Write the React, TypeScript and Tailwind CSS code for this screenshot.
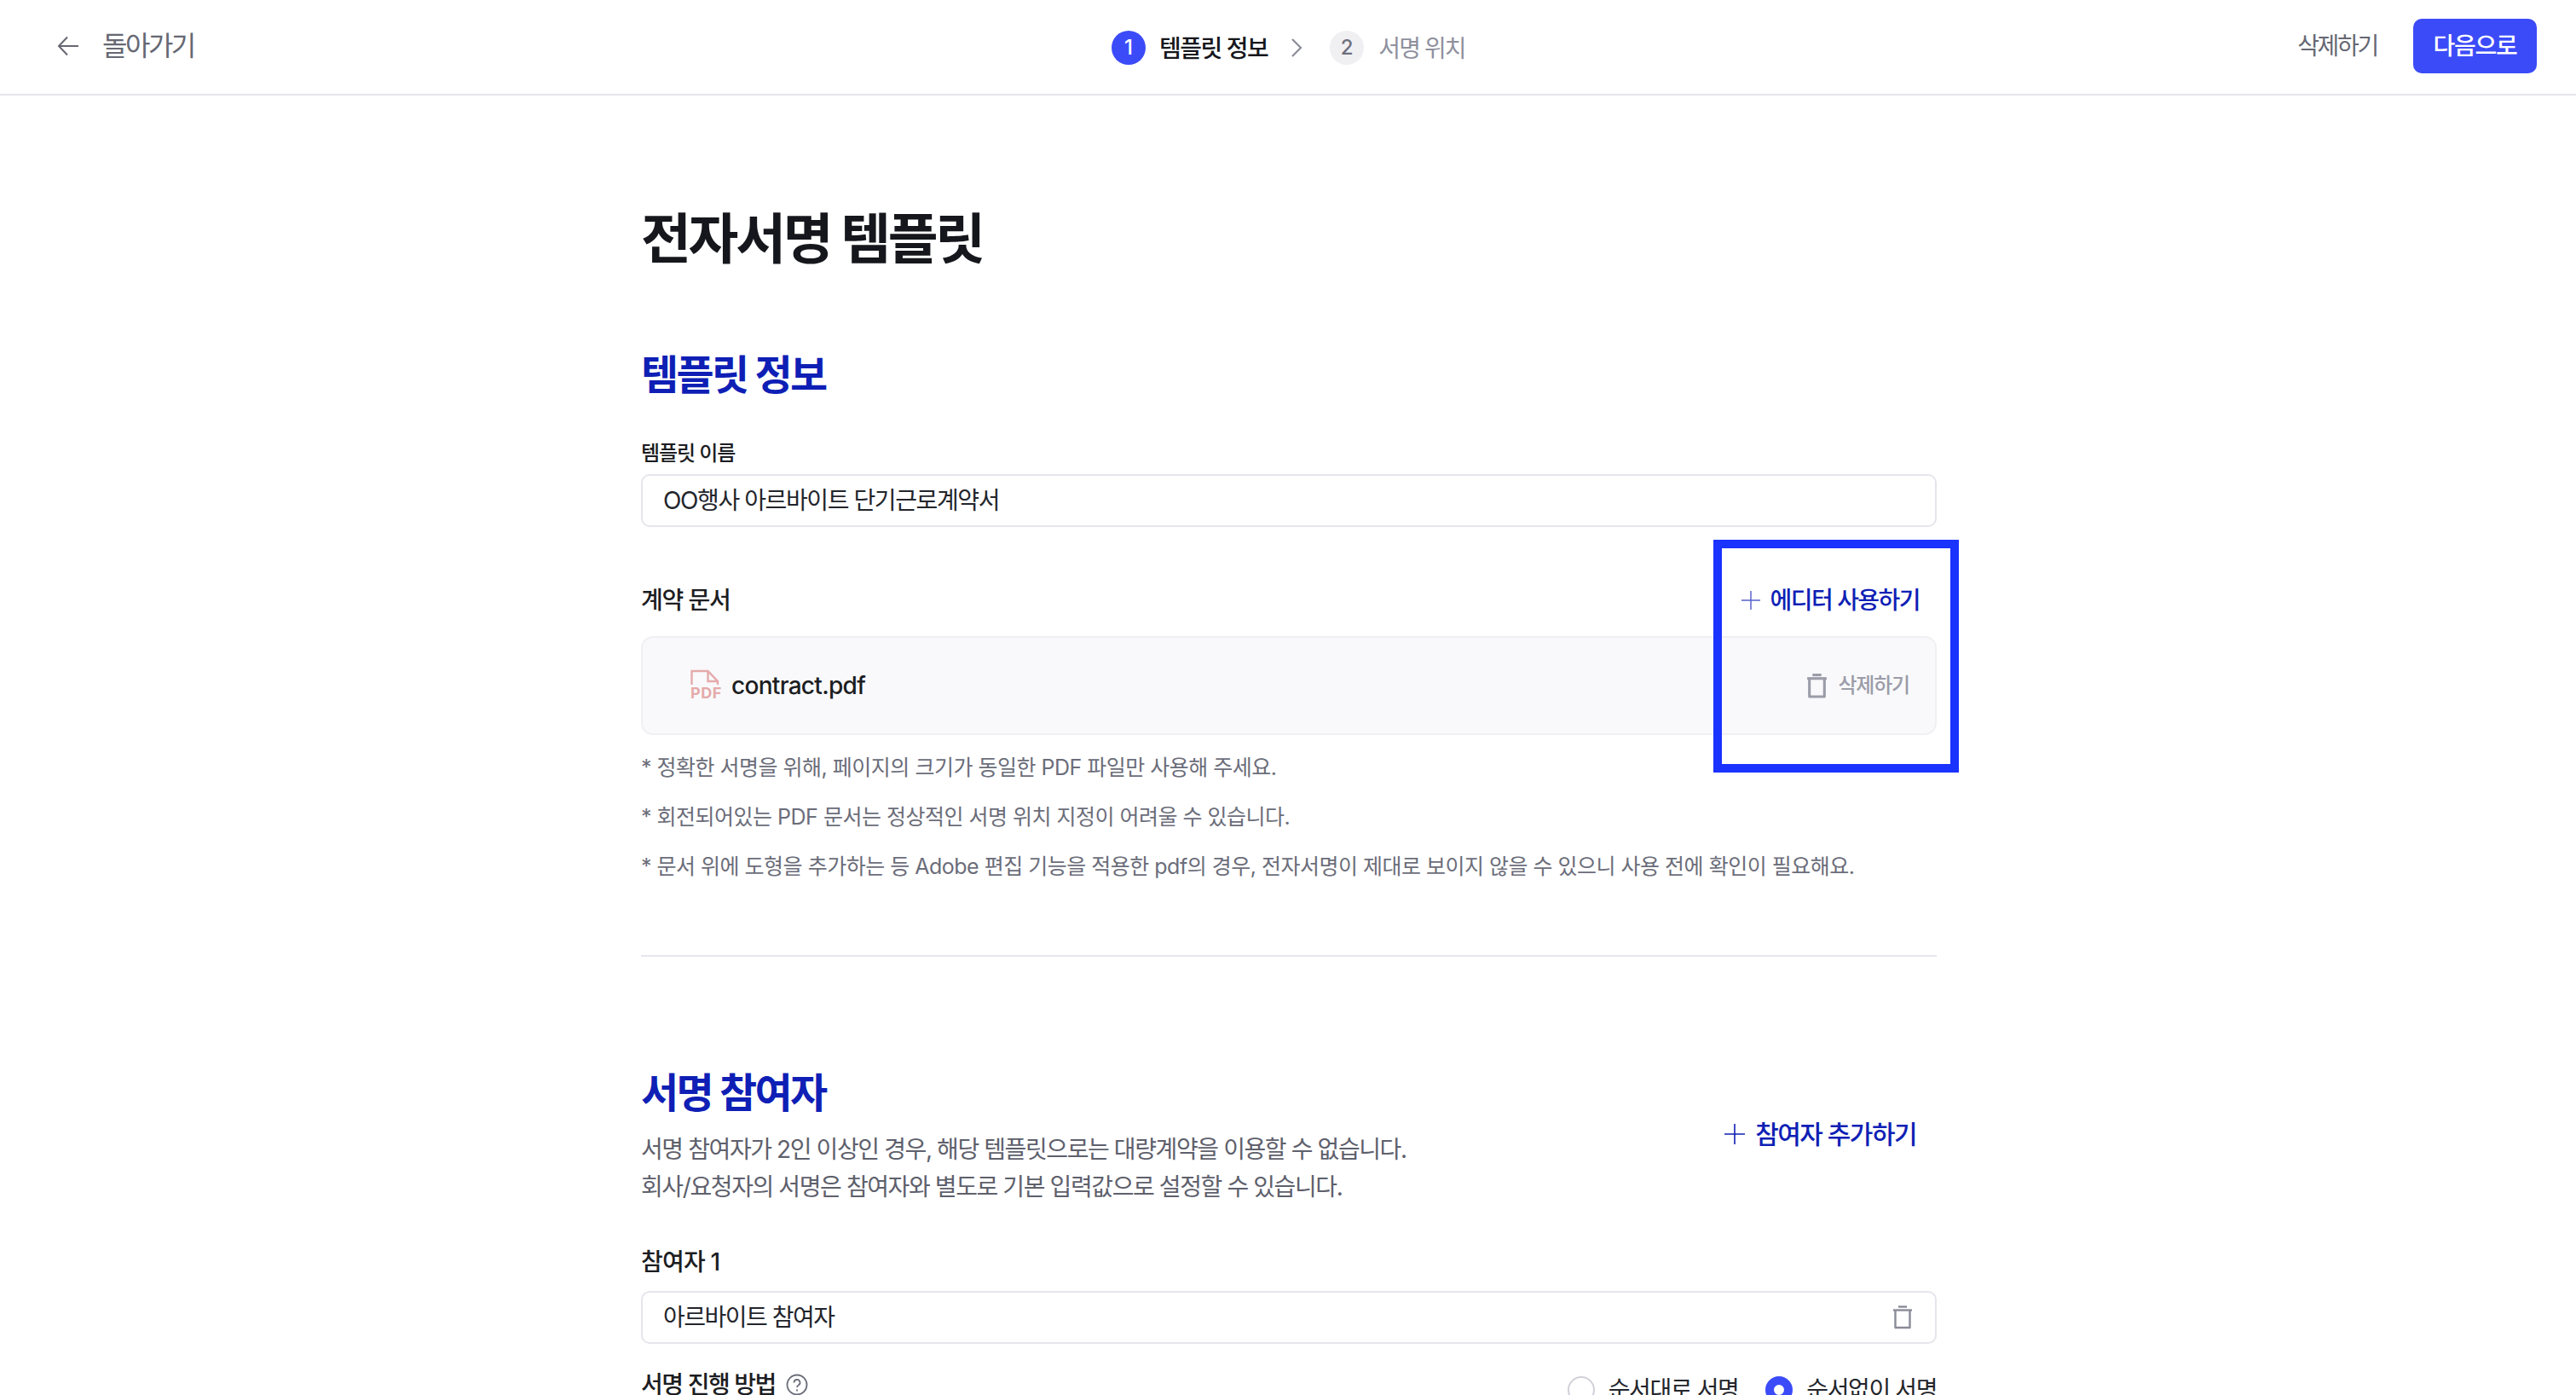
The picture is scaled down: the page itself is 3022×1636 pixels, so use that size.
import React from "react";

function Trash({ className, sw = 2.4 }: { className?: string; sw?: number }) {
  return (
    <svg viewBox="0 0 24 28" className={className} fill="none" stroke="currentColor" strokeWidth={sw}>
      <path d="M7 1.5h10" />
      <path d="M1 5.5h22" />
      <path d="M3.5 5.5v20.5h17V5.5" strokeLinejoin="round" />
    </svg>
  );
}

function Plus({ className }: { className?: string }) {
  return (
    <svg viewBox="0 0 24 24" className={className} fill="none" stroke="currentColor" strokeWidth="1.6">
      <path d="M12 0v24M0 12h24" />
    </svg>
  );
}

function PdfIcon() {
  return (
    <div className="w-[36px] h-[38px] flex flex-col items-start text-[#e5aaaa]">
      <svg viewBox="0 0 34 18" className="w-[34px] h-[18px]" fill="none" stroke="currentColor" strokeWidth="2.4">
        <path d="M1.5 18V2h19l11.5 12v4" />
        <path d="M20.5 2v12h11.5" />
      </svg>
      <span className="text-[18px] leading-[18px] font-bold tracking-[0.5px] mt-[1px]">PDF</span>
    </div>
  );
}

export default function App() {
  return (
    <div className="relative w-[3022px] h-[1636px] overflow-hidden bg-white font-['Inter','Noto_Sans_CJK_KR',sans-serif] text-[#1c1d22]">
      <header className="h-[112px] border-b-2 border-[#e5e5ec] flex items-center justify-between pl-[66px] pr-[46px] pb-[2px] relative">
        <div className="flex items-center gap-[28px] text-[#666873]">
          <svg viewBox="0 0 28 28" className="w-[28px] h-[28px] mr-[-2px]" fill="none" stroke="currentColor" strokeWidth="2">
            <path d="M26 14H3M13 3.5L3 14l10 10.5" />
          </svg>
          <span className="text-[32px] leading-[40px] tracking-[-2.5px]">돌아가기</span>
        </div>
        <div className="absolute left-[1304px] top-[34px] flex items-center">
          <span className="w-[40px] h-[40px] rounded-full bg-[#3c4bf8] text-white text-[24px] font-medium flex items-center justify-center">1</span>
          <span className="ml-[16px] pt-[3px] text-[28px] leading-[40px] font-medium text-[#16171c] tracking-[-1.5px]">템플릿 정보</span>
          <svg viewBox="0 0 14 24" className="ml-[27px] w-[14px] h-[24px] text-[#8b8c99]" fill="none" stroke="currentColor" strokeWidth="2.2">
            <path d="M2 2l10 10L2 22" />
          </svg>
          <span className="ml-[32px] w-[40px] h-[40px] rounded-full bg-[#f0f0f3] text-[#6f707d] text-[24px] font-medium flex items-center justify-center">2</span>
          <span className="ml-[17px] pt-[3px] text-[28px] leading-[40px] text-[#8f909e] tracking-[-1.9px]">서명 위치</span>
        </div>
        <div className="flex items-center gap-[42px]">
          <span className="text-[28px] leading-[40px] text-[#666873] tracking-[-2.3px]">삭제하기</span>
          <span className="w-[145px] h-[64px] rounded-[10px] bg-[#3c4bf8] text-white text-[28px] font-medium flex items-center justify-center tracking-[-1.2px]">다음으로</span>
        </div>
      </header>

      <main className="w-[1520px] ml-[752px]">
        <h1 className="mt-[126px] text-[64px] leading-[84px] font-bold tracking-[-3.3px] text-[#16171c]">전자서명 템플릿</h1>
        <h2 className="mt-[86px] text-[48px] leading-[64px] font-bold tracking-[-2.6px] text-[#0f1fb5]">템플릿 정보</h2>

        <label className="block mt-[44px] text-[24px] leading-[32px] font-medium tracking-[-1.1px]">템플릿 이름</label>
        <div className="mt-[8px] h-[62px] border-2 border-[#e5e5ec] rounded-[10px] flex items-center pl-[24px] text-[28px] text-[#23252b] tracking-[-1.4px]">
          OO행사 아르바이트 단기근로계약서
        </div>

        <div className="mt-[54px] h-[64px] flex items-center justify-between">
          <span className="text-[28px] leading-[40px] font-medium tracking-[-1.2px]">계약 문서</span>
          <span className="flex items-center gap-[12px] mr-[20px] text-[#0f1fb5]">
            <Plus className="w-[22px] h-[22px] opacity-70" />
            <span className="text-[28px] leading-[40px] font-medium tracking-[-1.55px]">에디터 사용하기</span>
          </span>
        </div>

        <div className="mt-[10px] h-[116px] bg-[#f9f9fb] border-2 border-[#f0f0f3] rounded-[14px] flex items-center justify-between pl-[56px] pr-[30px]">
          <div className="flex items-center gap-[12px]">
            <PdfIcon />
            <span className="text-[28px] leading-[40px] font-medium tracking-[-0.7px]">contract.pdf</span>
          </div>
          <div className="flex items-center gap-[12px] text-[#9b9ca8]">
            <Trash className="w-[25px] h-[29px]" sw={3} />
            <span className="text-[24px] leading-[32px] tracking-[-1.2px] font-medium">삭제하기</span>
          </div>
        </div>

        <div className="mt-[22px] flex flex-col gap-[26px] text-[25px] leading-[32px] text-[#6b6d7a] tracking-[-0.5px]">
          <p>* 정확한 서명을 위해, 페이지의 크기가 동일한 PDF 파일만 사용해 주세요.</p>
          <p>* 회전되어있는 PDF 문서는 정상적인 서명 위치 지정이 어려울 수 있습니다.</p>
          <p>* 문서 위에 도형을 추가하는 등 Adobe 편집 기능을 적용한 pdf의 경우, 전자서명이 제대로 보이지 않을 수 있으니 사용 전에 확인이 필요해요.</p>
        </div>

        <div className="mt-[88px] h-[2px] bg-[#e5e5ec]" />

        <h2 className="mt-[128px] text-[48px] leading-[64px] font-bold tracking-[-2.6px] text-[#0f1fb5]">서명 참여자</h2>
        <div className="flex items-start justify-between">
          <div className="mt-[12px] text-[28px] leading-[44px] text-[#5e606c] tracking-[-1.4px]">
            <p>서명 참여자가 2인 이상인 경우, 해당 템플릿으로는 대량계약을 이용할 수 없습니다.</p>
            <p>회사/요청자의 서명은 참여자와 별도로 기본 입력값으로 설정할 수 있습니다.</p>
          </div>
          <span className="mt-[-4px] mr-[24px] flex items-center gap-[12px] text-[#0f1fb5]">
            <Plus className="w-[24px] h-[24px]" />
            <span className="text-[30px] leading-[40px] font-medium tracking-[-1.55px]">참여자 추가하기</span>
          </span>
        </div>

        <p className="mt-[46px] text-[28px] leading-[40px] font-medium tracking-[-0.8px]">참여자 1</p>
        <div className="mt-[14px] h-[62px] border-2 border-[#e5e5ec] rounded-[10px] flex items-center justify-between pl-[24px] pr-[26px] text-[28px] text-[#23252b] tracking-[-1.5px]">
          <span>아르바이트 참여자</span>
          <Trash className="w-[24px] h-[28px] text-[#8a8b98]" />
        </div>

        <div className="mt-[28px] flex items-start justify-between">
          <div className="flex items-center gap-[12px]">
            <span className="text-[28px] leading-[40px] font-medium tracking-[-1.45px]">서명 진행 방법</span>
            <svg viewBox="0 0 26 26" className="w-[26px] h-[26px] text-[#6b6d7a]" fill="none" stroke="currentColor" strokeWidth="1.8">
              <circle cx="13" cy="13" r="11.5" />
              <path d="M9.5 10.5a3.5 3.5 0 1 1 5.2 3c-1.2.7-1.7 1.3-1.7 2.5" />
              <path d="M13 18.5v2" />
            </svg>
          </div>
          <div className="mt-[6px] flex items-center text-[28px] leading-[40px] tracking-[-1.4px] text-[#23252b]">
            <span className="w-[32px] h-[32px] rounded-full border-2 border-[#d0d1d9]" />
            <span className="ml-[16px]">순서대로 서명</span>
            <span className="ml-[32px] w-[32px] h-[32px] rounded-full border-[10px] border-[#3c4bf8]" />
            <span className="ml-[16px]">순서없이 서명</span>
          </div>
        </div>
      </main>

      <div className="absolute left-[2010px] top-[633px] w-[288px] h-[273px] border-[10px] border-[#1a33ff]" />
    </div>
  );
}
